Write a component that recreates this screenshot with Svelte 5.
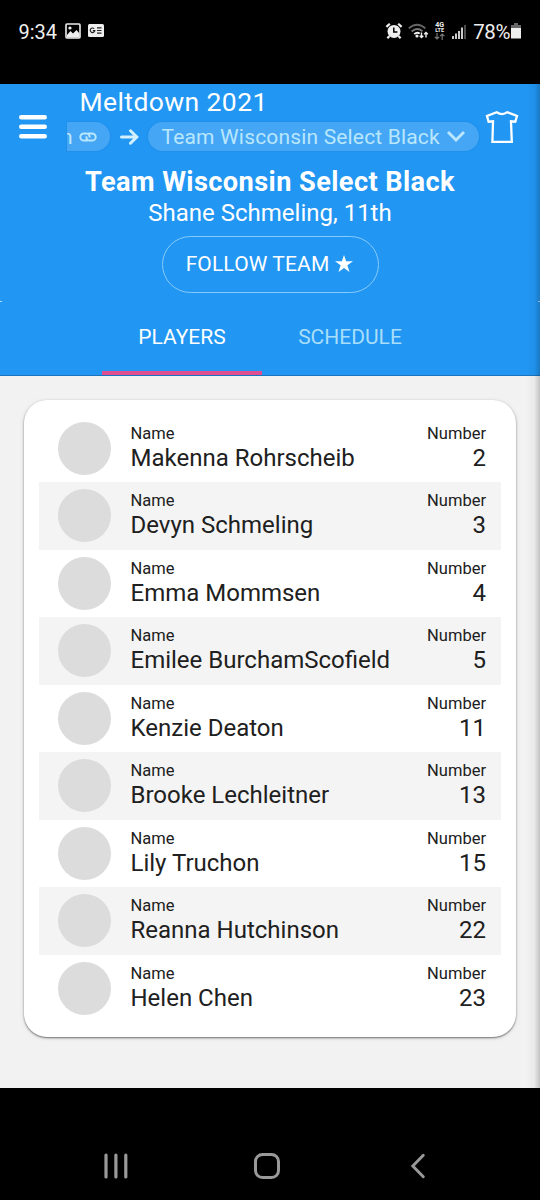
<script>
	let tab = $state('players');

	const players = [
		{ name: 'Makenna Rohrscheib', number: 2 },
		{ name: 'Devyn Schmeling', number: 3 },
		{ name: 'Emma Mommsen', number: 4 },
		{ name: 'Emilee BurchamScofield', number: 5 },
		{ name: 'Kenzie Deaton', number: 11 },
		{ name: 'Brooke Lechleitner', number: 13 },
		{ name: 'Lily Truchon', number: 15 },
		{ name: 'Reanna Hutchinson', number: 22 },
		{ name: 'Helen Chen', number: 23 }
	];
</script>

<div class="phone">
	<div class="status">
		<span class="clock">9:34</span>
		<svg class="photo" width="16" height="16" viewBox="0 0 16 16">
			<rect x="1" y="1" width="14" height="14" rx="1" fill="none" stroke="#eee" stroke-width="1.6" />
			<path d="M2 12 5.5 8 8 10.5 11.5 7 14.5 10.5V14.5H2Z" fill="#eee" />
			<circle cx="5" cy="5" r="1.6" fill="#eee" />
		</svg>
		<svg class="news" width="16" height="13" viewBox="0 0 16 13">
			<rect width="16" height="13" rx="1.5" fill="#eee" />
			<path d="M6.2 4.7A2.3 2.3 0 1 0 6.8 6.7H4.8M9 3.8h4.5M9 6.5h4.5M9 9.2h4.5" fill="none" stroke="#222" stroke-width="1.2" />
		</svg>
		<div class="right">
			<svg width="18" height="18" viewBox="0 0 18 18">
				<circle cx="9" cy="9.4" r="6.5" fill="#eee" />
				<path d="M1.4 4.9 4.8 1.7M16.6 4.9 13.2 1.7M4.5 14 2.4 16.2M13.5 14 15.6 16.2" stroke="#eee" stroke-width="2.2" />
				<path d="M8.8 5.5V9.9H12.4" fill="none" stroke="#000" stroke-width="1.5" />
			</svg>
			<svg class="wifi" width="21" height="16" viewBox="0 0 21 16">
				<g fill="none" stroke-width="1.8">
					<path d="M.8 5.4Q9 -2 17.4 5.4" stroke="#666" />
					<path d="M3.6 8.5Q9 3.6 14.5 8.2" stroke="#777" />
					<path d="M6.2 11.2Q9 8.6 11.8 10.6" stroke="#eee" />
				</g>
				<circle cx="9" cy="13" r="1.6" fill="#eee" />
				<path d="M13.5 9.5v5M11.7 12.7l1.8 1.9 1.8-1.9M18 14.5v-5M16.2 11.3 18 9.4l1.8 1.9" fill="none" stroke="#eee" stroke-width="1.4" />
			</svg>
			<div class="lte">
				<b>4G</b>
				<b class="small">LTE</b>
				<svg width="11" height="7" viewBox="0 0 11 7">
					<path d="M3 0v6M.8 3.8 3 6l2.2-2.2M8.2 7V1M6 3.2 8.2 1l2.2 2.2" fill="none" stroke="#777" stroke-width="1.2" />
				</svg>
			</div>
			<svg class="signal" width="14" height="15" viewBox="0 0 14 15">
				<path d="M1 15v-3M4 15V9.5M7 15V7M10 15V3.5" stroke="#eee" stroke-width="1.7" />
				<path d="M13 15V1" stroke="#666" stroke-width="1.5" />
			</svg>
			<span class="percent">78%</span>
			<svg class="battery" width="10" height="16" viewBox="0 0 10 16">
				<path d="M3 0h4v2h3v3H0V2h3z" fill="#666" />
				<path d="M0 5h10v10.5H0z" fill="#eee" />
			</svg>
		</div>
	</div>

	<div class="app">
		<header>
			<div class="bar">
				<button class="menu" aria-label="Menu">
					<svg width="28" height="26" viewBox="0 0 28 26">
						<path d="M2.3 3.2h23.4M2.3 12.7h23.4M2.3 22.2h23.4" stroke="#fff" stroke-width="4.6" stroke-linecap="round" />
					</svg>
				</button>
				<div class="middle">
					<div class="event">Meltdown 2021</div>
					<div class="crumbs">
						<span class="chip cut">
							<span class="tail">n</span>
							<svg width="18" height="10" viewBox="0 0 18 10">
								<path d="M9 8.6H5A3.7 3.6 0 0 1 5 1.4H7.6A3 3.2 0 0 1 10.4 5.6M9 1.4H13A3.7 3.6 0 0 1 13 8.6H10.4A3 3.2 0 0 1 7.6 4.4" fill="none" stroke="#b9e7fc" stroke-width="2" />
							</svg>
						</span>
						<svg class="arrow" width="19" height="16" viewBox="0 0 19 16">
							<path d="M1.5 8H16M10.5 1.8 16.8 8 10.5 14.2" fill="none" stroke="#d2f0fe" stroke-width="3" stroke-linecap="round" />
						</svg>
						<span class="chip team">
							<span>Team Wisconsin Select Black</span>
							<svg width="20" height="12" viewBox="0 0 20 12">
								<path d="M2 2 10 10 18 2" fill="none" stroke="#b9e7fc" stroke-width="2.9" />
							</svg>
						</span>
					</div>
				</div>
				<svg class="shirt" width="34" height="34" viewBox="0 0 34 34">
					<path d="M11.7 2.2Q17.2 6 22.3 2.2L32 6 30.3 11.7 26 11.3 26.8 31.8H7.4L8 11.3 3.6 11.7 2 6Z" fill="none" stroke="#fff" stroke-width="2.3" />
				</svg>
			</div>

			<h1>Team Wisconsin Select Black</h1>
			<p class="coach">Shane Schmeling, 11th</p>
			<button class="follow">
				FOLLOW TEAM
				<svg width="18" height="17" viewBox="0 0 18 17">
					<path d="M9 0 11.1 6.3H18L12.4 10.2 14.5 17 9 12.9 3.5 17 5.6 10.2 0 6.3H6.9Z" fill="#fff" />
				</svg>
			</button>

			<nav class="tabs">
				<button class:active={tab === 'players'} onclick={() => (tab = 'players')}>PLAYERS</button>
				<button class:active={tab === 'schedule'} onclick={() => (tab = 'schedule')}>SCHEDULE</button>
			</nav>
		</header>

		<main>
			{#if tab === 'players'}
				<ul class="card">
					{#each players as p}
						<li>
							<span class="avatar"></span>
							<div class="field">
								<small>Name</small>
								<span>{p.name}</span>
							</div>
							<div class="field num">
								<small>Number</small>
								<span>{p.number}</span>
							</div>
						</li>
					{/each}
				</ul>
			{/if}
		</main>
		<div class="edge"></div>
	</div>

	<div class="navbar">
		<svg width="24" height="26" viewBox="0 0 24 26">
			<path d="M2 2v22M11.9 2v22M21.8 2v22" stroke="#999" stroke-width="3.2" stroke-linecap="round" />
		</svg>
		<svg class="home" width="28" height="28" viewBox="0 0 28 28">
			<rect x="2.5" y="2.5" width="23" height="23" rx="7" fill="none" stroke="#999" stroke-width="3" />
		</svg>
		<svg width="16" height="26" viewBox="0 0 16 26">
			<path d="M13.3 2.2 2.8 13 13.3 23.8" fill="none" stroke="#999" stroke-width="2.9" stroke-linecap="round" />
		</svg>
	</div>
</div>

<style>
	:global(body) {
		margin: 0;
		background: #000;
		font-family: Roboto, "Liberation Sans", sans-serif;
	}
	.phone {
		width: 540px;
		height: 1200px;
		display: flex;
		flex-direction: column;
		overflow: hidden;
		background: #000;
	}
	svg {
		display: block;
		flex: none;
	}
	button {
		border: 0;
		padding: 0;
		background: none;
		font: inherit;
		color: inherit;
		cursor: pointer;
	}
	.status {
		height: 62px;
		margin-bottom: 22px;
		padding: 0 19px 0 18.5px;
		display: flex;
		align-items: center;
		color: #eee;
		font-size: 20px;
	}
	.clock {
		width: 46.5px;
		padding-top: 1px;
	}
	.photo,
	.news {
		margin-top: -1px;
	}
	.news {
		margin-left: 7px;
	}
	.right {
		margin-left: auto;
		display: flex;
		align-items: center;
	}
	.wifi {
		margin-left: 5px;
	}
	.lte {
		width: 11px;
		margin-left: 5px;
		display: flex;
		flex-direction: column;
		align-items: center;
	}
	.lte b {
		font-size: 7px;
		line-height: 6px;
	}
	.lte .small {
		font-size: 5.5px;
		line-height: 5px;
	}
	.signal {
		margin-left: 7px;
	}
	.percent {
		margin-left: 7px;
		padding-top: 1px;
		font-size: 20.5px;
		letter-spacing: -0.4px;
	}
	.battery {
		margin-left: 1px;
	}
	.app {
		position: relative;
		height: 1004px;
		display: flex;
		flex-direction: column;
		background: #f2f2f2;
	}
	header {
		height: 291px;
		display: flex;
		flex-direction: column;
		align-items: center;
		background: #2196f3;
		border-bottom: 1px solid #1b74bd;
		color: #fff;
	}
	.bar {
		width: 100%;
		height: 80px;
		display: flex;
		align-items: flex-start;
	}
	.menu {
		margin: 30px 0 0 19px;
	}
	.middle {
		width: 412px;
		margin-left: 20px;
	}
	.event {
		padding: 2px 0 0 12.5px;
		font-size: 26.5px;
		line-height: 31px;
		letter-spacing: 0.4px;
	}
	.crumbs {
		margin-top: 5px;
		display: flex;
		align-items: center;
	}
	.chip {
		box-sizing: border-box;
		height: 29px;
		display: flex;
		align-items: center;
		background: #45a6f5;
		box-shadow: 0 0 1px 1px rgba(25, 118, 210, 0.2);
		color: #b9e7fc;
		font-size: 21px;
		line-height: 29px;
		letter-spacing: 0.17px;
		white-space: nowrap;
	}
	.chip > span {
		padding-top: 1px;
	}
	.cut {
		width: 43px;
		border-radius: 0 15px 15px 0;
		overflow: hidden;
	}
	.tail {
		margin-left: -6px;
		margin-right: 6px;
	}
	.arrow {
		margin: 0 9px 0 10px;
	}
	.team {
		width: 331px;
		padding: 0 13px 0 13.5px;
		justify-content: space-between;
		border-radius: 15px;
	}
	.team svg {
		margin-top: -1px;
	}
	.shirt {
		margin: 26px 0 0 6px;
	}
	h1 {
		margin: 0;
		font-size: 27.2px;
		line-height: 36px;
		font-weight: 700;
		letter-spacing: 0.4px;
	}
	.coach {
		margin: 0;
		font-size: 24px;
		line-height: 26px;
	}
	.follow {
		box-sizing: border-box;
		width: 217px;
		height: 57px;
		margin-top: 10px;
		padding: 0 1px 2px 0;
		display: flex;
		align-items: center;
		justify-content: center;
		gap: 6px;
		border: 1.5px solid #86cbf9;
		border-radius: 29px;
		font-size: 21px;
		letter-spacing: 0.12px;
	}
	.tabs {
		width: 100%;
		margin-top: auto;
		display: flex;
		justify-content: center;
	}
	.tabs::before,
	.tabs::after {
		content: '';
		width: 2px;
		height: 1px;
		margin-right: auto;
		background: #b5dcfa;
	}
	.tabs::after {
		margin: 0 0 0 auto;
	}
	.tabs button {
		box-sizing: border-box;
		width: 176px;
		height: 74px;
		padding-top: 2px;
		border-bottom: 4px solid transparent;
		font-size: 21px;
		color: #a9defb;
	}
	.tabs button:first-child {
		width: 160px;
	}
	.tabs .active {
		border-color: #e04e92;
		color: #fff;
	}
	main {
		padding: 23.5px 24px 24px;
	}
	.card {
		margin: 0;
		padding: 15px 15px 14.5px;
		list-style: none;
		background: #fff;
		border-radius: 23px;
		box-shadow: 0 1px 2px rgba(0, 0, 0, 0.5), 0 1px 5px rgba(0, 0, 0, 0.1);
	}
	li {
		box-sizing: border-box;
		height: 67.5px;
		padding: 0 15px 0 18.5px;
		display: flex;
		align-items: center;
		color: #202020;
	}
	li:nth-child(even) {
		background: #f4f4f4;
	}
	.avatar {
		width: 53px;
		height: 53px;
		margin-right: 20px;
		border-radius: 50%;
		background: #dcdcdc;
	}
	.field {
		padding-bottom: 2px;
		display: flex;
		flex-direction: column;
		font-size: 24px;
		line-height: 28px;
	}
	.field small {
		font-size: 16.5px;
		line-height: 21px;
	}
	.num {
		margin-left: auto;
		align-items: flex-end;
	}
	.edge {
		position: absolute;
		top: 0;
		right: 0;
		bottom: 0;
		width: 14px;
		background: linear-gradient(to right, transparent, rgba(0, 0, 0, 0.04) 60%, rgba(0, 0, 0, 0.2));
		pointer-events: none;
	}
	.navbar {
		height: 112px;
		padding: 43px 114px 0 104px;
		box-sizing: border-box;
		display: flex;
		align-items: center;
		justify-content: space-between;
	}
	.home {
		margin-right: 4px;
	}
</style>
